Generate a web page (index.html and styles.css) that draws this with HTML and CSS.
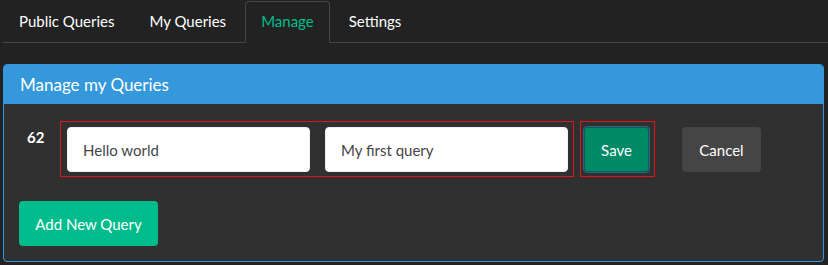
FILE: index.html
```html
<!DOCTYPE html>
<html lang="en">
<head>
  <meta charset="UTF-8" />
  <title>Manage my Queries</title>
  <link rel="stylesheet" href="styles.css">
</head>
<body>

  <ul class="tabs">
    <li class="tab">Public Queries</li>
    <li class="tab">My Queries</li>
    <li class="tab active">Manage</li>
    <li class="tab">Settings</li>
  </ul>

  <div class="panel">
    <div class="panel-heading">Manage my Queries</div>
    <div class="panel-body">
      <div class="query-row">
        <span class="query-id">62</span>
        <div class="edit-box fields">
          <input class="field" type="text" value="Hello world">
          <input class="field" type="text" value="My first query">
        </div>
        <div class="edit-box save-box">
          <button class="btn btn-save">Save</button>
        </div>
        <button class="btn btn-cancel">Cancel</button>
      </div>
      <button class="btn btn-add">Add New Query</button>
    </div>
  </div>

</body>
</html>
```

FILE: styles.css
```css
body {
  margin: 0;
  background-color: #222;
  color: #fff;
  font-family: Lato, "Open Sans", sans-serif;
  font-size: 15px;
  line-height: 21px;
}

.tabs {
  display: flex;
  list-style: none;
  margin: 0 0 0 3px;
  padding: 1px 0 0 0;
  border-bottom: 1px solid #464545;
}

.tab {
  margin: 0 3px -1px 0;
  padding: 9px 15px 10px;
  border: 1px solid transparent;
  border-radius: 4px 4px 0 0;
  cursor: pointer;
}

.tab.active {
  color: #00bc8c;
  background-color: #222;
  border-color: #464545;
  border-bottom-color: #222;
}

.panel {
  margin: 21px 4px 0 3px;
  border: 1px solid #3498db;
  border-radius: 4px;
  background-color: #303030;
  overflow: hidden;
}

.panel-heading {
  background-color: #3498db;
  padding: 10px 15px 10px 16px;
  font-size: 17px;
  line-height: 19px;
}

.panel-body {
  padding: 15px;
}

.query-row {
  display: flex;
  align-items: flex-start;
  margin: 2px 0 24px;
}

.query-id {
  width: 33px;
  padding: 6px 0 0 8px;
  font-weight: bold;
}

.edit-box {
  border: 1px solid #e0141c;
}

.fields {
  display: flex;
  gap: 15px;
  padding: 5px 5px 4px 6px;
}

.field {
  width: 243px;
  height: 45px;
  box-sizing: border-box;
  padding: 10px 15px;
  border: 1px solid #f1f1f1;
  border-radius: 4px;
  background-color: #fff;
  color: #464545;
  font-family: inherit;
  font-size: 15px;
}

.save-box {
  margin-left: 6px;
  padding: 5px 5px 4px 3px;
}

.btn {
  height: 45px;
  padding: 0 15px;
  border: 1px solid transparent;
  border-radius: 4px;
  color: #fff;
  font-family: inherit;
  font-size: 15px;
  cursor: pointer;
}

.btn-save {
  width: 65px;
  background-color: #008a68;
  border-color: #00634b;
  border-radius: 3px;
  outline: 1px solid #3b5b8b;
}

.btn-cancel {
  width: 79px;
  margin: 6px 0 0 27px;
  background-color: #464545;
}

.btn-add {
  display: block;
  width: 139px;
  background-color: #00bc8c;
}
```
